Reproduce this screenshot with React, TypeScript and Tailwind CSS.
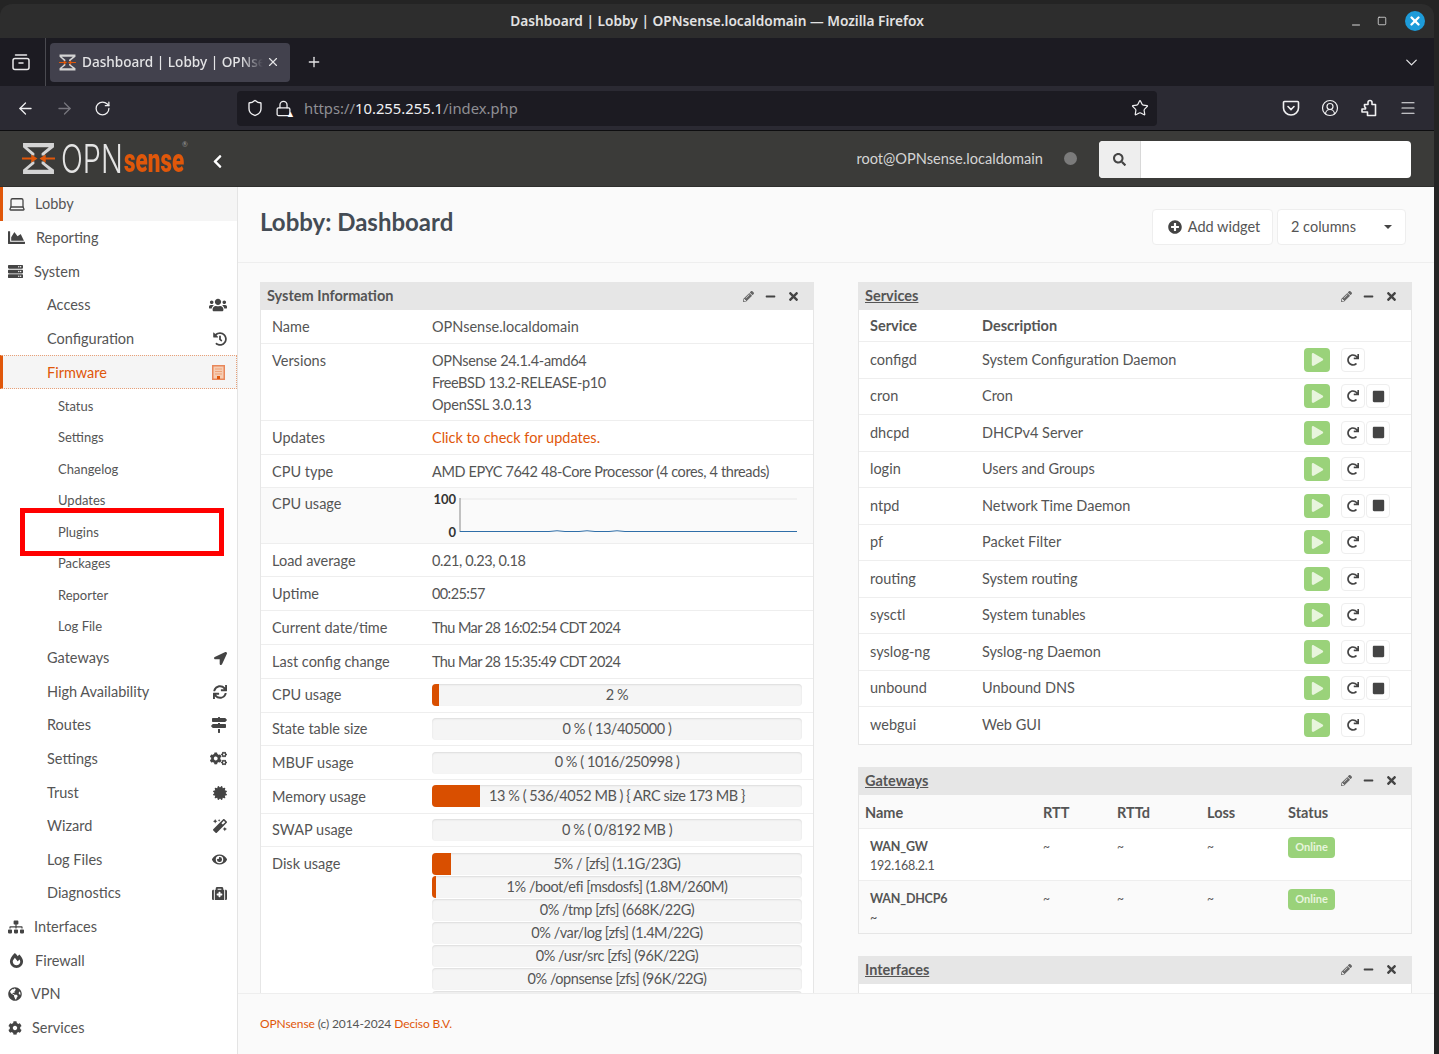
import type { ReactNode } from "react";
import {
  ArrowLeft,
  ArrowRight,
  RotateCw,
  Shield,
  Lock,
  Star,
  Menu,
  ChevronDown,
  Plus,
  X,
  CircleUserRound,
  Minus,
  Square,
  Laptop,
} from "lucide-react";
import {
  FaCertificate,
  FaChartArea,
  FaChevronLeft,
  FaCog,
  FaCogs,
  FaEye,
  FaFireAlt,
  FaGlobeAmericas,
  FaHistory,
  FaLocationArrow,
  FaMagic,
  FaMapSigns,
  FaMedkit,
  FaMinus,
  FaPencilAlt,
  FaPlay,
  FaPlusCircle,
  FaRedo,
  FaSearch,
  FaServer,
  FaSitemap,
  FaStop,
  FaSync,
  FaTimes,
  FaUsers,
} from "react-icons/fa";

const page = "font-['Lato','Noto_Sans',sans-serif]";

function Hourglass({ className }: { className: string }) {
  return (
    <svg viewBox="0 0 32 32" className={className}>
      <path d="M1 1h30v4l-9 7v1h-3v-2l7-6H5l7 6v2H9v-1L1 5z" fill="#d4d4d4" />
      <path d="M1 31h30v-4l-9-7v-1h-3v2l7 6H5l7-6v-2H9v1l-8 7z" fill="#d4d4d4" />
      <path d="M0 15h9v-3l6 4-6 4v-3H0zM32 15h-9v-3l-6 4 6 4v-3h9z" fill="#e0570a" />
    </svg>
  );
}

function TitleBar() {
  return (
    <div className="relative flex h-[34px] items-center justify-center rounded-t-xl bg-[#2d2d2d] font-['Noto_Sans',sans-serif] text-[13.7px] font-semibold text-[#e2e2e2]">
      Dashboard | Lobby | OPNsense.localdomain — Mozilla Firefox
      <div className="absolute right-[9px] top-[7px] flex items-center gap-[15px] text-[#d8d8d8]">
        <Minus size={12} strokeWidth={2} className="mt-2" />
        <Square size={10} strokeWidth={2} className="mr-[3px]" />
        <span className="flex h-5 w-5 items-center justify-center rounded-full bg-[#1d9bd9] text-white">
          <X size={14} strokeWidth={4} />
        </span>
      </div>
    </div>
  );
}

function TabBar() {
  return (
    <div className="flex h-[48px] items-center bg-[#1c1b22] text-[#e4e4e6]">
      <div className="flex h-full w-[46px] items-center justify-center border-r border-[#4a4a50]">
        <svg viewBox="0 0 18 18" className="h-[18px] w-[18px] -translate-x-[2px]" fill="none" stroke="#e8e8ea" strokeWidth="1.5">
          <rect x="1" y="5.5" width="16" height="11" rx="2" />
          <path d="M3.5 2h11M7 10h4" strokeLinecap="round" />
        </svg>
      </div>
      <div className="ml-[4px] flex h-[39px] w-[240px] items-center rounded bg-[#42414d] pl-[9px] pr-[10px]">
        <Hourglass className="h-[17px] w-[17px] shrink-0" />
        <span className="ml-[6px] w-[181px] overflow-hidden whitespace-nowrap font-['Noto_Sans',sans-serif] text-[13.6px] font-medium [mask-image:linear-gradient(to_right,black_88%,transparent)]">
          Dashboard | Lobby | OPNsense.localdomain
        </span>
        <X size={14} className="ml-auto" />
      </div>
      <Plus size={16} strokeWidth={2} className="ml-[16px]" />
      <ChevronDown size={19} strokeWidth={1.6} className="ml-auto mr-[13px]" />
    </div>
  );
}

function NavBar() {
  return (
    <div className="flex h-[45px] items-center border-b border-[#0e0e10] bg-[#2b2a33] text-[#f0f0f2]">
      <div className="flex w-[237px] items-center">
        <ArrowLeft size={19} strokeWidth={1.6} className="ml-[16px]" />
        <ArrowRight size={19} strokeWidth={1.6} className="ml-[20px] text-[#77767e]" />
        <RotateCw size={17} strokeWidth={1.8} className="ml-[20px]" />
      </div>
      <div className="flex h-[35px] w-[920px] items-center rounded bg-[#1c1b22] font-['Noto_Sans',sans-serif] text-[14.8px]">
        <Shield size={18} strokeWidth={1.8} className="ml-[9px]" />
        <span className="relative ml-[11px]">
          <Lock size={17} strokeWidth={1.8} />
          <span className="absolute -bottom-[1px] -right-[3px] text-[9px] leading-none text-white">▲</span>
        </span>
        <span className="ml-[12px] text-[#8f8f94]">
          https://<span className="text-[#f0f0f2]">10.255.255.1</span>/index.php
        </span>
        <Star size={18} strokeWidth={1.6} className="ml-auto mr-[8px]" />
      </div>
      <div className="ml-auto flex items-center gap-[21px] pr-[17px]">
        <svg viewBox="0 0 18 18" className="h-[18px] w-[18px]" fill="none" stroke="currentColor" strokeWidth="1.6">
          <path d="M2.5 2.5h13a1 1 0 0 1 1 1V9a7.5 7 0 0 1-15 0V3.5a1 1 0 0 1 1-1z" />
          <path d="M6 7.5l3 3 3-3" strokeLinecap="round" />
        </svg>
        <CircleUserRound size={18} strokeWidth={1.6} />
        <svg viewBox="0 0 18 18" className="h-[18px] w-[18px]" fill="none" stroke="currentColor" strokeWidth="1.6" strokeLinejoin="round">
          <path d="M2 10h3.5V8.5a1.5 1.5 0 0 1-1-1.5V5.5h3.5V3.5a2 2 0 0 1 4 0v2h3.5V16.5H7.5v-3.5H2z" />
        </svg>
        <Menu size={18} strokeWidth={1.6} />
      </div>
    </div>
  );
}

function AppHeader() {
  return (
    <div className={`flex h-[56px] items-center border-b border-[#2f2f2d] bg-[#3b3b39] ${page}`}>
      <Hourglass className="ml-[22px] h-[33px] w-[33px] shrink-0" />
      <div className="ml-[6px] h-[40px] w-[63px] shrink-0 whitespace-nowrap">
        <span className="block origin-left scale-x-[0.72] font-['Inter',sans-serif] text-[40px] font-light leading-[40px] text-[#e4e4e4]">
          OPN
        </span>
      </div>
      <div className="relative mt-[2px] h-[40px] w-[69px] shrink-0 whitespace-nowrap">
        <span className="block origin-left scale-x-[0.66] font-['Roboto',sans-serif] text-[34px] font-black leading-[40px] text-[#e0570a]">
          sense
        </span>
        <span className="absolute left-[58px] top-[1px] text-[7px] leading-none text-[#999]">®</span>
      </div>
      <FaChevronLeft className="ml-[17px] mt-[5px] text-[15px] text-white" />
      <span className="ml-auto text-[14.6px] text-[#d4d4d4]">root@OPNsense.localdomain</span>
      <span className="ml-[21px] h-[13px] w-[13px] rounded-full bg-[#7b7b7b]" />
      <div className="ml-[22px] mr-[23px] mt-px flex h-[37px] w-[312px] rounded-sm bg-white">
        <span className="flex w-[42px] items-center justify-center rounded-l-sm border-r border-[#d8d8d8] bg-[#eeeeee] text-[13px] text-[#444]">
          <FaSearch />
        </span>
      </div>
    </div>
  );
}

const primary = "h-[33.6px]";

function NavRow({ label, right }: { label: string; right?: ReactNode }) {
  return (
    <div className={`flex ${primary} shrink-0 items-center pl-[47px] text-[14.5px] text-[#555]`}>
      <span>{label}</span>
      {right && <span className="ml-auto mr-[10px] text-[15px] text-[#444]">{right}</span>}
    </div>
  );
}

function SubRow({ label, marked }: { label: string; marked?: boolean }) {
  return (
    <div className="relative flex h-[31.5px] shrink-0 items-center pl-[58px] pt-[3px] text-[13px] text-[#555]">
      {label}
      {marked && (
        <span className="absolute left-[20px] top-[-7px] h-[48px] w-[204px] border-[5px] border-[#ff0000]" />
      )}
    </div>
  );
}

function Sidebar() {
  return (
    <div className="flex w-[238px] shrink-0 flex-col overflow-hidden border-r border-[#e4e4e4] bg-white">
      <div className="flex h-[34px] shrink-0 items-center border-l-[3px] border-[#e0570a] bg-[#f5f5f5] text-[14.5px] text-[#555]">
        <Laptop size={18} strokeWidth={1.7} className="ml-[5px] text-[#444]" />
        <span className="ml-[9px]">Lobby</span>
      </div>
      <div className={`flex ${primary} shrink-0 items-center text-[14.5px] text-[#555]`}>
        <FaChartArea className="ml-[8px] text-[17px] text-[#444]" />
        <span className="ml-[11px]">Reporting</span>
      </div>
      <div className={`flex ${primary} shrink-0 items-center text-[14.5px] text-[#555]`}>
        <FaServer className="ml-[8px] text-[15px] text-[#444]" />
        <span className="ml-[11px]">System</span>
      </div>
      <NavRow label="Access" right={<FaUsers className="text-[18px]" />} />
      <NavRow label="Configuration" right={<FaHistory className="text-[14px]" />} />
      <div className="flex h-[34px] shrink-0 items-center border border-dotted border-[#e8a078] border-l-[3px] border-l-[#e0570a] bg-[#f5f5f5] text-[14.5px] text-[#e0570a] [border-left-style:solid]">
        <span className="ml-[44px]">Firmware</span>
        <svg viewBox="0 0 13 15" className="ml-auto mr-[11px] h-[15px] w-[13px]" fill="none">
          <rect x="0.75" y="0.75" width="11.5" height="13.5" fill="#f6cdb3" stroke="#e8875a" strokeWidth="1.5" />
          <path d="M3 4h7M3 6.5h7M3 9h7" stroke="#eda37a" strokeWidth="1" />
          <rect x="5" y="11" width="3" height="3" fill="#e0570a" />
        </svg>
      </div>
      {["Status", "Settings", "Changelog", "Updates"].map((s) => (
        <SubRow key={s} label={s} />
      ))}
      <SubRow label="Plugins" marked />
      {["Packages", "Reporter", "Log File"].map((s) => (
        <SubRow key={s} label={s} />
      ))}
      <NavRow label="Gateways" right={<FaLocationArrow className="text-[13px]" />} />
      <NavRow label="High Availability" right={<FaSync className="text-[14px]" />} />
      <NavRow label="Routes" right={<FaMapSigns className="text-[16px]" />} />
      <NavRow label="Settings" right={<FaCogs className="text-[17px]" />} />
      <NavRow label="Trust" right={<FaCertificate className="text-[14px]" />} />
      <NavRow label="Wizard" right={<FaMagic className="text-[14px]" />} />
      <NavRow label="Log Files" right={<FaEye />} />
      <NavRow label="Diagnostics" right={<FaMedkit />} />
      <div className={`flex ${primary} shrink-0 items-center text-[14.5px] text-[#555]`}>
        <FaSitemap className="ml-[8px] text-[16px] text-[#444]" />
        <span className="ml-[10px]">Interfaces</span>
      </div>
      <div className={`flex ${primary} shrink-0 items-center text-[14.5px] text-[#555]`}>
        <FaFireAlt className="ml-[9px] text-[15px] text-[#444]" />
        <span className="ml-[11px]">Firewall</span>
      </div>
      <div className={`flex ${primary} shrink-0 items-center text-[14.5px] text-[#555]`}>
        <FaGlobeAmericas className="ml-[8px] text-[14px] text-[#444]" />
        <span className="ml-[9px]">VPN</span>
      </div>
      <div className={`flex ${primary} shrink-0 items-center text-[14.5px] text-[#555]`}>
        <FaCog className="ml-[8px] text-[14px] text-[#444]" />
        <span className="ml-[10px]">Services</span>
      </div>
    </div>
  );
}

function WidgetHead({ title, link }: { title: string; link?: boolean }) {
  return (
    <div className="flex h-[28px] shrink-0 items-center bg-[#e6e6e6] pl-[6px] pr-[13px] text-[14.5px] font-bold text-[#555]">
      <span className={link ? "underline" : ""}>{title}</span>
      <FaPencilAlt className="ml-auto text-[11px] text-[#666]" />
      <FaMinus className="ml-[11px] text-[11px] text-[#444]" />
      <FaTimes className="ml-[11px] text-[13px] text-[#444]" />
    </div>
  );
}

function InfoRow({ label, h, children }: { label: string; h: string; children: ReactNode }) {
  return (
    <div className={`flex ${h} shrink-0 border-b border-[#eeeeee] px-[11px] pt-[6px] text-[14.5px] leading-[22px] text-[#555]`}>
      <span className="w-[160px] shrink-0">{label}</span>
      <div className="min-w-0 flex-1">{children}</div>
    </div>
  );
}

function Bar({ pct, text }: { pct: number; text: string }) {
  return (
    <div className="relative flex h-[22px] w-full items-center justify-center overflow-hidden rounded-sm bg-[#f5f5f5] shadow-[inset_0_1px_2px_rgba(0,0,0,0.1)]">
      <span className="absolute left-0 top-0 h-full bg-[#d94f00]" style={{ width: `${pct}%` }} />
      <span className="relative text-[14.5px] leading-none tracking-[-0.45px] text-[#555]">{text}</span>
    </div>
  );
}

function BarRow({ label, pct, text }: { label: string; pct: number; text: string }) {
  return (
    <div className="flex h-[33.7px] shrink-0 items-center border-b border-[#eeeeee] px-[11px] text-[14.5px] text-[#555]">
      <span className="w-[160px] shrink-0">{label}</span>
      <Bar pct={pct} text={text} />
    </div>
  );
}

function SystemInfo() {
  const disks: [number, string][] = [
    [5, "5% / [zfs] (1.1G/23G)"],
    [1, "1% /boot/efi [msdosfs] (1.8M/260M)"],
    [0, "0% /tmp [zfs] (668K/22G)"],
    [0, "0% /var/log [zfs] (1.4M/22G)"],
    [0, "0% /usr/src [zfs] (96K/22G)"],
    [0, "0% /opnsense [zfs] (96K/22G)"],
    [0, ""],
  ];
  return (
    <div className="flex w-[554px] shrink-0 flex-col border-x border-[#e6e6e6] bg-white">
      <WidgetHead title="System Information" />
      <InfoRow label="Name" h="h-[34px]">OPNsense.localdomain</InfoRow>
      <InfoRow label="Versions" h="h-[77px]">
        <div className="tracking-[-0.3px]">OPNsense 24.1.4-amd64</div>
        <div className="tracking-[-0.4px]">FreeBSD 13.2-RELEASE-p10</div>
        <div className="tracking-[-0.2px]">OpenSSL 3.0.13</div>
      </InfoRow>
      <InfoRow label="Updates" h="h-[34px]">
        <span className="text-[#e0570a]">Click to check for updates.</span>
      </InfoRow>
      <InfoRow label="CPU type" h="h-[33px]">
        <span className="tracking-[-0.37px]">AMD EPYC 7642 48-Core Processor (4 cores, 4 threads)</span>
      </InfoRow>
      <div className="flex h-[56px] shrink-0 border-b border-[#eeeeee] bg-[#fafafa] px-[11px] pt-[6px] text-[14.5px] leading-[22px] text-[#555]">
        <span className="-mt-px w-[160px] shrink-0">CPU usage</span>
        <div className="flex flex-1">
          <div className="-mt-[2px] flex h-[47px] w-[24px] flex-col items-end justify-between text-[13px] font-bold leading-[14px] text-[#333]">
            <span>100</span>
            <span>0</span>
          </div>
          <svg viewBox="0 0 338 38" className="ml-[3px] mt-[3px] h-[38px] w-[338px]">
            <path d="M1 2H338" stroke="#eeeeee" strokeWidth="1.5" />
            <path d="M1 1V35" stroke="#888888" strokeWidth="1" />
            <path d="M1 34.5H90Q98 33 106 34.5H120Q128 33 136 34.5H150Q158 33 166 34.5H338" stroke="#2f6ea8" strokeWidth="1" fill="none" />
          </svg>
        </div>
      </div>
      <InfoRow label="Load average" h="h-[33px]">
        <span className="tracking-[-0.4px]">0.21, 0.23, 0.18</span>
      </InfoRow>
      <InfoRow label="Uptime" h="h-[34px]">
        <span className="tracking-[-0.6px]">00:25:57</span>
      </InfoRow>
      <InfoRow label="Current date/time" h="h-[34px]">
        <span className="tracking-[-0.6px]">Thu Mar 28 16:02:54 CDT 2024</span>
      </InfoRow>
      <InfoRow label="Last config change" h="h-[34px]">
        <span className="tracking-[-0.6px]">Thu Mar 28 15:35:49 CDT 2024</span>
      </InfoRow>
      <BarRow label="CPU usage" pct={2} text="2 %" />
      <BarRow label="State table size" pct={0} text="0 % ( 13/405000 )" />
      <BarRow label="MBUF usage" pct={0} text="0 % ( 1016/250998 )" />
      <BarRow label="Memory usage" pct={13} text="13 % ( 536/4052 MB ) { ARC size 173 MB }" />
      <BarRow label="SWAP usage" pct={0} text="0 % ( 0/8192 MB )" />
      <div className="flex shrink-0 px-[11px] pt-[6px] text-[14.5px] text-[#555]">
        <span className="w-[160px] shrink-0 leading-[22px]">Disk usage</span>
        <div className="flex flex-1 flex-col gap-[1px]">
          {disks.map(([pct, text], i) => (
            <Bar key={i} pct={pct} text={text} />
          ))}
        </div>
      </div>
    </div>
  );
}

const services: [string, string, boolean][] = [
  ["configd", "System Configuration Daemon", false],
  ["cron", "Cron", true],
  ["dhcpd", "DHCPv4 Server", true],
  ["login", "Users and Groups", false],
  ["ntpd", "Network Time Daemon", true],
  ["pf", "Packet Filter", false],
  ["routing", "System routing", false],
  ["sysctl", "System tunables", false],
  ["syslog-ng", "Syslog-ng Daemon", true],
  ["unbound", "Unbound DNS", true],
  ["webgui", "Web GUI", false],
];

function Services() {
  return (
    <div className="flex shrink-0 flex-col border-x border-b border-[#e6e6e6] bg-white">
      <WidgetHead title="Services" link />
      <div className="flex h-[32px] shrink-0 items-center border-b border-[#eeeeee] pl-[11px] text-[14.5px] font-bold text-[#555]">
        <span className="w-[112px]">Service</span>
        <span>Description</span>
      </div>
      {services.map(([name, desc, stop]) => (
        <div key={name} className="flex h-[36.5px] shrink-0 items-center border-b border-[#eeeeee] pl-[11px] text-[14.5px] text-[#555] last:border-b-0">
          <span className="w-[112px]">{name}</span>
          <span className="w-[322px]">{desc}</span>
          <span className="flex h-[24px] w-[26px] items-center justify-center rounded-sm bg-[#9ad27a] text-[13px] text-[#e8f5dd]">
            <FaPlay />
          </span>
          <span className="ml-[11px] flex h-[24px] w-[24px] items-center justify-center rounded-sm border border-[#eeeeee] bg-white text-[12px] text-[#444]">
            <FaRedo />
          </span>
          {stop && (
            <span className="ml-[1px] flex h-[24px] w-[24px] items-center justify-center rounded-sm border border-[#eeeeee] bg-white text-[13px] text-[#444]">
              <FaStop />
            </span>
          )}
        </div>
      ))}
    </div>
  );
}

function GatewayRow({ name, ip }: { name: string; ip: string }) {
  return (
    <div className="flex h-[52px] shrink-0 border-b border-[#eeeeee] pt-[8px] text-[14.5px] text-[#555] last:border-b-0">
      <div className="ml-[11px] w-[173px] text-[12.5px] leading-[19px] tracking-[-0.2px]">
        <div className="font-bold">{name}</div>
        <div>{ip}</div>
      </div>
      <span className="w-[74px] text-[12px] leading-[20px]">~</span>
      <span className="w-[90px] text-[12px] leading-[20px]">~</span>
      <span className="w-[81px] text-[12px] leading-[20px]">~</span>
      <span className="flex h-[21px] w-[47px] items-center justify-center rounded-sm bg-[#9ad27a] text-[11px] font-bold text-[#e8f5dd]">
        Online
      </span>
    </div>
  );
}

function Gateways() {
  return (
    <div className="flex shrink-0 flex-col border-x border-b border-[#e6e6e6] bg-white">
      <WidgetHead title="Gateways" link />
      <div className="flex h-[34px] shrink-0 items-center border-b border-[#eeeeee] bg-[#fafafa] pl-[6px] pt-[3px] text-[14.5px] font-bold text-[#555]">
        <span className="w-[178px]">Name</span>
        <span className="w-[74px]">RTT</span>
        <span className="w-[90px]">RTTd</span>
        <span className="w-[81px]">Loss</span>
        <span>Status</span>
      </div>
      <GatewayRow name="WAN_GW" ip="192.168.2.1" />
      <div className="bg-[#fafafa]">
        <GatewayRow name="WAN_DHCP6" ip="~" />
      </div>
    </div>
  );
}

function Main() {
  return (
    <div className="flex min-w-0 flex-1 flex-col bg-[#fafafa]">
      <div className="flex h-[76px] shrink-0 border-b border-[#eeeeee] pl-[22px] pr-[28px] pt-[22px]">
        <h1 className="text-[24px] font-bold leading-[26px] text-[#444c55]">Lobby: Dashboard</h1>
        <button className="ml-auto flex h-[36px] w-[121px] items-center justify-center gap-[6px] rounded-sm border border-[#eeeeee] bg-white pl-[3px] text-[14.5px] text-[#555]">
          <FaPlusCircle className="text-[14px] text-[#444]" />
          Add widget
        </button>
        <button className="ml-[4px] flex h-[36px] w-[129px] items-center rounded-sm border border-[#eeeeee] bg-white pl-[13px] pr-[13px] text-[14.5px] text-[#555]">
          2 columns
          <span className="ml-auto h-0 w-0 border-x-[4px] border-t-[4px] border-x-transparent border-t-[#444]" />
        </button>
      </div>
      <div className="flex h-[730px] shrink-0 gap-[44px] overflow-hidden pl-[22px] pt-[19px]">
        <SystemInfo />
        <div className="flex w-[554px] shrink-0 flex-col gap-[22px]">
          <Services />
          <Gateways />
          <div className="flex flex-1 flex-col border-x border-[#e6e6e6] bg-white">
            <WidgetHead title="Interfaces" link />
          </div>
        </div>
      </div>
      <div className="flex flex-1 items-center border-t border-[#eeeeee] pl-[22px] text-[12px] tracking-[-0.1px] text-[#555]">
        <span>
          <span className="text-[#e0570a]">OPNsense</span> (c) 2014-2024{" "}
          <span className="text-[#e0570a]">Deciso B.V.</span>
        </span>
      </div>
    </div>
  );
}

export default function App() {
  return (
    <div className="h-[1054px] w-[1439px] overflow-hidden bg-[#242424] pr-[5px] pt-[4px]">
      <div className="flex h-full flex-col">
        <TitleBar />
        <TabBar />
        <NavBar />
        <AppHeader />
        <div className={`flex min-h-0 flex-1 ${page}`}>
          <Sidebar />
          <Main />
        </div>
      </div>
    </div>
  );
}
